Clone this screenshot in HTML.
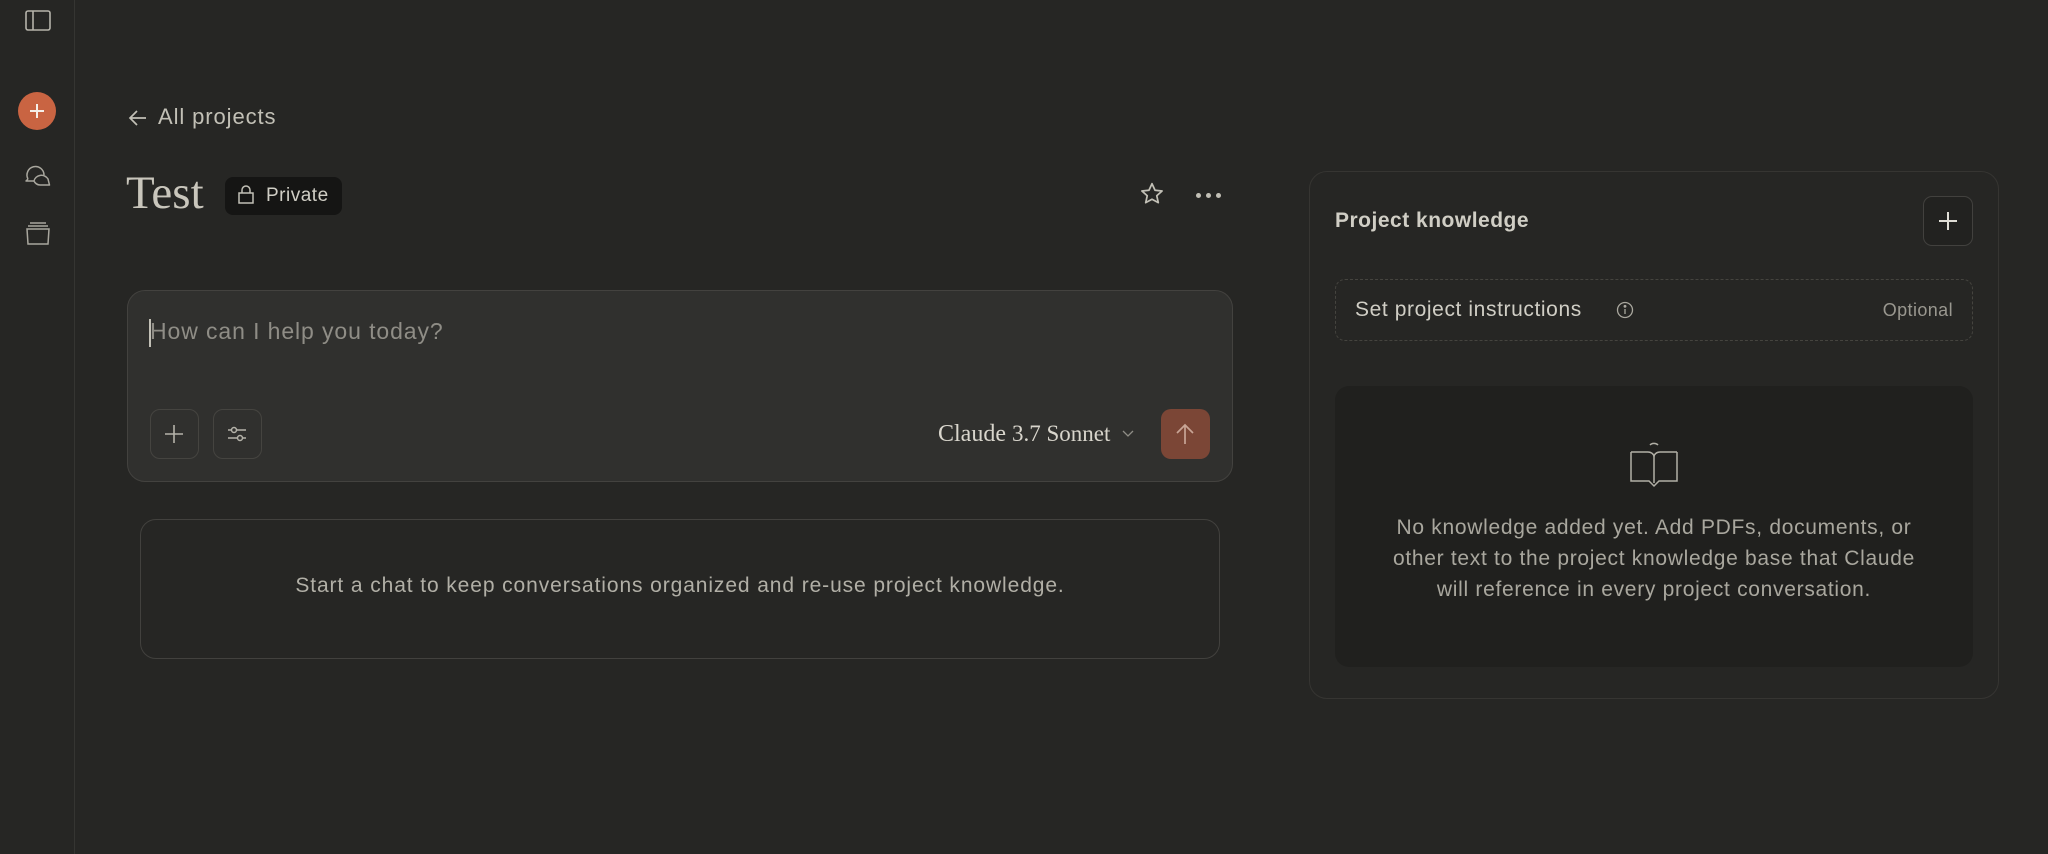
<!DOCTYPE html>
<html><head><meta charset="utf-8"><style>
*{box-sizing:border-box;margin:0;padding:0}
html,body{width:2048px;height:854px;background:#262624;overflow:hidden;font-family:"Liberation Sans",sans-serif;color:#c2c0b6;letter-spacing:0.9px}
.abs{position:absolute}
.side{left:0;top:0;width:75px;height:854px;border-right:1px solid #353532}
.serif{font-family:"Liberation Serif",serif;letter-spacing:0}
</style></head><body>
<div class="abs side"></div>
<svg class="abs" style="left:24px;top:9px" width="28" height="24" viewBox="0 0 28 24" fill="none" stroke="#b5b3aa" stroke-width="1.6"><rect x="2" y="2" width="24" height="19" rx="2"/><line x1="9" y1="2" x2="9" y2="21"/></svg>
<div class="abs" style="left:18px;top:92px;width:38px;height:38px;border-radius:50%;background:#c96442"></div>
<svg class="abs" style="left:27px;top:101px" width="20" height="20" viewBox="0 0 20 20" stroke="#f5efe8" stroke-width="2"><line x1="10" y1="3" x2="10" y2="17"/><line x1="3" y1="10" x2="17" y2="10"/></svg>
<svg class="abs" style="left:24px;top:162px" width="28" height="26" viewBox="0 0 28 26" fill="none" stroke="#a9a79e" stroke-width="1.5" stroke-linejoin="round"><path d="M4 17A8.5 8.5 0 1 1 20 13"/><path d="M4 17L2 19h8"/><path d="M10 19a7.5 7 0 0 1 14 -2l1.5 6H16a7 7 0 0 1 -6 -4"/></svg>
<svg class="abs" style="left:24px;top:221px" width="28" height="26" viewBox="0 0 28 26" fill="none" stroke="#a9a79e" stroke-width="1.5"><line x1="6" y1="2" x2="22" y2="2"/><line x1="4" y1="5" x2="24" y2="5"/><path d="M3 8h22l-1 15H4z"/></svg>

<svg class="abs" style="left:128px;top:108px" width="20" height="20" viewBox="0 0 20 20" fill="none" stroke="#c2c0b6" stroke-width="1.7"><path d="M18 10H3M9 3l-7 7 7 7"/></svg>
<div class="abs" style="left:158px;top:104px;font-size:22px;color:#c2c0b6">All projects</div>

<div class="abs serif" style="left:126px;top:166px;font-size:47px;color:#c9c6bc">Test</div>
<div class="abs" style="left:225px;top:177px;width:117px;height:38px;border-radius:8px;background:#151514"></div>
<svg class="abs" style="left:237px;top:185px" width="18" height="20" viewBox="0 0 18 20" fill="none" stroke="#c2c0b6" stroke-width="1.5"><rect x="2" y="8" width="14" height="10"/><path d="M5 8V5a4 4 0 0 1 8 0v3"/></svg>
<div class="abs" style="left:266px;top:185px;font-size:19px;color:#d0cec5;letter-spacing:0.5px">Private</div>

<svg class="abs" style="left:1139px;top:181px" width="26" height="26" viewBox="0 0 24 24" fill="none" stroke="#c2c0b6" stroke-width="1.6" stroke-linejoin="round"><path d="M12 2.5l2.8 6 6.5.7-4.9 4.4 1.4 6.4L12 16.8 6.2 20l1.4-6.4L2.7 9.2l6.5-.7z"/></svg>
<div class="abs" style="left:1196px;top:193px;width:5px;height:5px;border-radius:50%;background:#c2c0b6"></div>
<div class="abs" style="left:1206px;top:193px;width:5px;height:5px;border-radius:50%;background:#c2c0b6"></div>
<div class="abs" style="left:1216px;top:193px;width:5px;height:5px;border-radius:50%;background:#c2c0b6"></div>

<div class="abs" style="left:127px;top:290px;width:1106px;height:192px;border-radius:18px;background:#30302e;border:1px solid #43423f"></div>
<div class="abs" style="left:149px;top:319px;width:1.5px;height:28px;background:#c2c0b6"></div>
<div class="abs" style="left:150px;top:318px;font-size:23px;color:#8f8d86">How can I help you today?</div>
<div class="abs" style="left:150px;top:409px;width:49px;height:50px;border-radius:10px;border:1px solid #454440"></div>
<svg class="abs" style="left:163px;top:423px" width="22" height="22" stroke="#b5b3aa" stroke-width="1.6"><line x1="11" y1="2" x2="11" y2="20"/><line x1="2" y1="11" x2="20" y2="11"/></svg>
<div class="abs" style="left:213px;top:409px;width:49px;height:50px;border-radius:10px;border:1px solid #454440"></div>
<svg class="abs" style="left:226px;top:424px" width="22" height="20" fill="none" stroke="#b5b3aa" stroke-width="1.5"><line x1="2" y1="6" x2="20" y2="6"/><line x1="2" y1="14" x2="20" y2="14"/><circle cx="8" cy="6" r="2.5" fill="#30302e"/><circle cx="14" cy="14" r="2.5" fill="#30302e"/></svg>
<div class="abs serif" style="left:938px;top:421px;font-size:24px;color:#d8d5cc">Claude <span style="font-size:23px">3.7 Sonnet</span></div>
<svg class="abs" style="left:1122px;top:428px" width="12" height="10" fill="none" stroke="#8f8d86" stroke-width="1.3"><path d="M1 3l5 5 5-5"/></svg>
<div class="abs" style="left:1161px;top:409px;width:49px;height:50px;border-radius:10px;background:#7b4636"></div>
<svg class="abs" style="left:1174px;top:422px" width="22" height="24" fill="none" stroke="#c8a596" stroke-width="1.7"><path d="M11 22V3M3 11l8-8 8 8"/></svg>

<div class="abs" style="left:140px;top:519px;width:1080px;height:140px;border-radius:16px;border:1px solid #42413e"></div>
<div class="abs" style="left:140px;top:574px;width:1080px;text-align:center;font-size:21px;color:#b1afa6">Start a chat to keep conversations organized and re-use project knowledge.</div>

<div class="abs" style="left:1309px;top:171px;width:690px;height:528px;border-radius:18px;border:1px solid #363532"></div>
<div class="abs" style="left:1335px;top:209px;font-size:21px;font-weight:bold;color:#d0cec5;letter-spacing:0.5px">Project knowledge</div>
<div class="abs" style="left:1923px;top:196px;width:50px;height:50px;border-radius:9px;border:1px solid #42413e;background:#222220"></div>
<svg class="abs" style="left:1937px;top:210px" width="22" height="22" stroke="#e0ded6" stroke-width="2"><line x1="11" y1="2" x2="11" y2="20"/><line x1="2" y1="11" x2="20" y2="11"/></svg>
<div class="abs" style="left:1335px;top:279px;width:638px;height:62px;border-radius:10px;border:1.5px dashed #45443f"></div>
<div class="abs" style="left:1355px;top:298px;font-size:21px;color:#d0cec5;letter-spacing:0.6px">Set project instructions</div>
<svg class="abs" style="left:1616px;top:301px" width="18" height="18" fill="none" stroke="#a9a79e" stroke-width="1.3"><circle cx="9" cy="9" r="7.5"/><line x1="9" y1="8" x2="9" y2="13"/><circle cx="9" cy="5.3" r=".8" fill="#a9a79e"/></svg>
<div class="abs" style="left:1800px;top:300px;width:153px;text-align:right;font-size:18px;color:#99978f;letter-spacing:0.4px">Optional</div>
<div class="abs" style="left:1335px;top:386px;width:638px;height:281px;border-radius:14px;background:#20201e"></div>
<svg class="abs" style="left:1629px;top:440px" width="50" height="50" viewBox="0 0 50 50" fill="none" stroke="#b1afa6" stroke-width="1.5"><path d="M21 5a5 4 0 0 1 8 0"/><path d="M2 12h17a6 5 0 0 1 6 5v26M48 12H31a6 5 0 0 0-6 5"/><path d="M2 12v29h18l5 5 5-5h18V12"/></svg>
<div class="abs" style="left:1320px;top:512px;width:668px;text-align:center;font-size:21px;line-height:31px;color:#a9a79e;letter-spacing:0.7px">No knowledge added yet. Add PDFs, documents, or<br>other text to the project knowledge base that Claude<br>will reference in every project conversation.</div>
</body></html>
